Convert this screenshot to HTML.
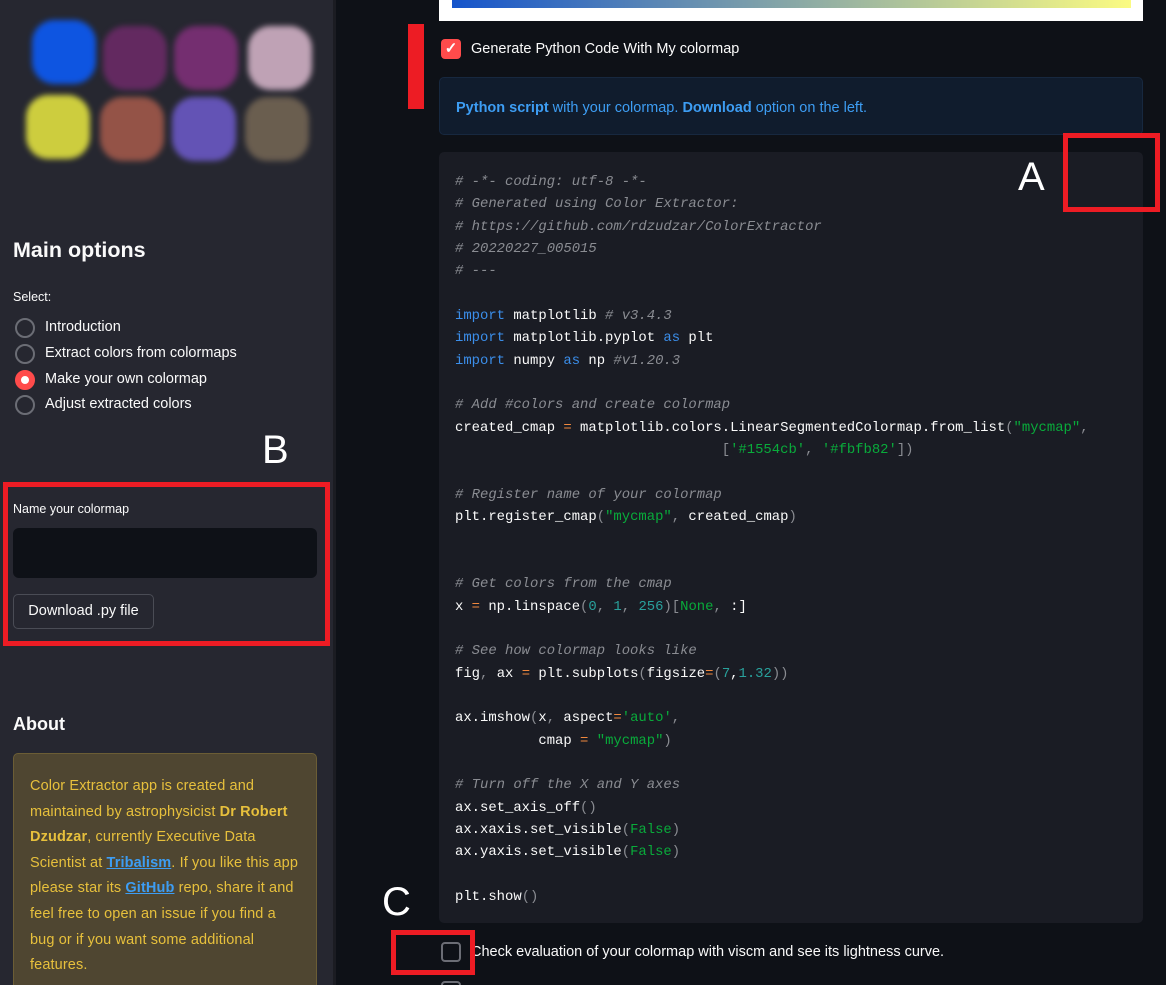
<!DOCTYPE html>
<html><head><meta charset="utf-8"><style>
*{margin:0;padding:0;box-sizing:border-box}
html,body{width:1166px;height:985px;overflow:hidden}
body{background:#0e1117;position:relative;font-family:"Liberation Sans",sans-serif;color:#fafafa}
.abs{position:absolute}
#side{left:0;top:0;width:333px;height:985px;background:#262730;overflow:hidden}
.blob{position:absolute;width:64px;height:64px;border-radius:35%;filter:blur(3px);opacity:.9}
.radio{position:absolute;left:15px;width:20px;height:20px;border-radius:50%;border:2px solid #6b6d75}
.rl{position:absolute;left:45px;font-size:14.5px;color:#fafafa}
pre{font-family:"Liberation Mono",monospace;font-size:13.9px;line-height:22.35px;color:#fafafa}
.c{color:#8a8c92;font-style:italic}.k{color:#3b8eea}.s{color:#09ab3b}.n{color:#29a19c}.o{color:#f0883e}.p{color:#8a8c92}
.red{border:5px solid #ed1c24;position:absolute}
.L{position:absolute;color:#fff;font-size:40px;font-family:"Liberation Sans",sans-serif}
</style></head><body>
<div id="side" class="abs">
 <div class="blob" style="left:32px;top:20px;background:#0c5af5"></div>
 <div class="blob" style="left:103px;top:26px;background:#6a2a66"></div>
 <div class="blob" style="left:174px;top:26px;background:#7d2f77"></div>
 <div class="blob" style="left:248px;top:26px;background:#d0b0c4"></div>
 <div class="blob" style="left:26px;top:95px;background:#e0e040"></div>
 <div class="blob" style="left:100px;top:97px;background:#a0584a"></div>
 <div class="blob" style="left:172px;top:97px;background:#6a58c4"></div>
 <div class="blob" style="left:245px;top:97px;background:#726453"></div>
 <div class="abs" style="left:13px;top:238px;font-size:21.5px;font-weight:bold">Main options</div>
 <div class="abs" style="left:13px;top:290px;font-size:12.5px">Select:</div>
 <div class="radio" style="top:318px"></div><div class="rl" style="top:319px">Introduction</div>
 <div class="radio" style="top:344px"></div><div class="rl" style="top:345px">Extract colors from colormaps</div>
 <div class="radio" style="top:370px;border:6px solid #ff4b4b;background:#fff"></div><div class="rl" style="top:371px">Make your own colormap</div>
 <div class="radio" style="top:395px"></div><div class="rl" style="top:396px">Adjust extracted colors</div>
 <div class="abs" style="left:13px;top:502px;font-size:12.5px">Name your colormap</div>
 <div class="abs" style="left:13px;top:528px;width:304px;height:50px;background:#0e1117;border-radius:6px"></div>
 <div class="abs" style="left:13px;top:594px;width:141px;height:35px;border:1px solid #4a4c55;border-radius:5px;font-size:14.5px;text-align:center;line-height:33px">Download .py file</div>
 <div class="abs" style="left:13px;top:714px;font-size:18px;font-weight:bold">About</div>
 <div class="abs" style="left:13px;top:753px;width:304px;height:260px;background:#4f4631;border:1px solid #6b5d35;border-radius:5px;padding:20px 16px;color:#e7c03c;font-size:14.5px;line-height:25.6px;letter-spacing:0.12px">Color Extractor app is created and maintained by astrophysicist <b>Dr Robert Dzudzar</b>, currently Executive Data Scientist at <b style="color:#3d9df3;text-decoration:underline">Tribalism</b>. If you like this app please star its <b style="color:#3d9df3;text-decoration:underline">GitHub</b> repo, share it and feel free to open an issue if you find a bug or if you want some additional features.</div>
</div>
<div class="abs" style="left:333px;top:0;width:3px;height:985px;background:#1b1c22"></div>
<div class="abs" style="left:439px;top:0;width:704px;height:21px;background:#fff"></div>
<div class="abs" style="left:452px;top:0;width:679px;height:8px;background:linear-gradient(90deg,#1554cb,#fbfb82)"></div>
<div class="abs" style="left:408px;top:24px;width:16px;height:85px;background:#ed1c24"></div>
<div class="abs" style="left:441px;top:39px;width:20px;height:20px;background:#ff4b4b;border-radius:4px;color:#fff;font-size:15px;text-align:center;line-height:20px;font-weight:bold">✓</div>
<div class="abs" style="left:471px;top:41px;font-size:14.5px">Generate Python Code With My colormap</div>
<div class="abs" style="left:439px;top:77px;width:704px;height:58px;background:#101c2d;border:1px solid #17283f;border-radius:5px;padding-left:16px;line-height:60px;font-size:14.5px;color:#3d9df3"><b>Python script</b> with your colormap. <b>Download</b> option on the left.</div>
<div class="abs" style="left:439px;top:152px;width:704px;height:771px;background:#1a1c24;border-radius:5px;padding:19px 16px"><pre><span class="c"># -*- coding: utf-8 -*-
# Generated using Color Extractor:
# https://github.com/rdzudzar/ColorExtractor
# 20220227_005015
# ---</span>

<span class="k">import</span> matplotlib <span class="c"># v3.4.3</span>
<span class="k">import</span> matplotlib.pyplot <span class="k">as</span> plt
<span class="k">import</span> numpy <span class="k">as</span> np <span class="c">#v1.20.3</span>

<span class="c"># Add #colors and create colormap</span>
created_cmap <span class="o">=</span> matplotlib.colors.LinearSegmentedColormap.from_list<span class="p">(</span><span class="s">"mycmap"</span><span class="p">,</span>
                                <span class="p">[</span><span class="s">'#1554cb'</span><span class="p">,</span> <span class="s">'#fbfb82'</span><span class="p">])</span>

<span class="c"># Register name of your colormap</span>
plt.register_cmap<span class="p">(</span><span class="s">"mycmap"</span><span class="p">,</span> created_cmap<span class="p">)</span>


<span class="c"># Get colors from the cmap</span>
x <span class="o">=</span> np.linspace<span class="p">(</span><span class="n">0</span><span class="p">,</span> <span class="n">1</span><span class="p">,</span> <span class="n">256</span><span class="p">)[</span><span class="s">None</span><span class="p">,</span> :]

<span class="c"># See how colormap looks like</span>
fig<span class="p">,</span> ax <span class="o">=</span> plt.subplots<span class="p">(</span>figsize<span class="o">=</span><span class="p">(</span><span class="n">7</span>,<span class="n">1.32</span><span class="p">))</span>

ax.imshow<span class="p">(</span>x<span class="p">,</span> aspect<span class="o">=</span><span class="s">'auto'</span><span class="p">,</span>
          cmap <span class="o">=</span> <span class="s">"mycmap"</span><span class="p">)</span>

<span class="c"># Turn off the X and Y axes</span>
ax.set_axis_off<span class="p">()</span>
ax.xaxis.set_visible<span class="p">(</span><span class="s">False</span><span class="p">)</span>
ax.yaxis.set_visible<span class="p">(</span><span class="s">False</span><span class="p">)</span>

plt.show<span class="p">()</span></pre></div>
<div class="abs" style="left:441px;top:942px;width:20px;height:20px;border:2px solid #6b6d75;border-radius:4px"></div>
<div class="abs" style="left:471px;top:944px;font-size:14.5px">Check evaluation of your colormap with viscm and see its lightness curve.</div>
<div class="abs" style="left:441px;top:981px;width:20px;height:20px;border:2px solid #6b6d75;border-radius:4px"></div>
<div class="red" style="left:1063px;top:133px;width:97px;height:79px"></div>
<div class="L" style="left:1018px;top:155px">A</div>
<div class="red" style="left:3px;top:482px;width:327px;height:164px"></div>
<div class="L" style="left:262px;top:428px">B</div>
<div class="red" style="left:391px;top:930px;width:84px;height:45px"></div>
<div class="L" style="left:382px;top:880px">C</div>
</body></html>
